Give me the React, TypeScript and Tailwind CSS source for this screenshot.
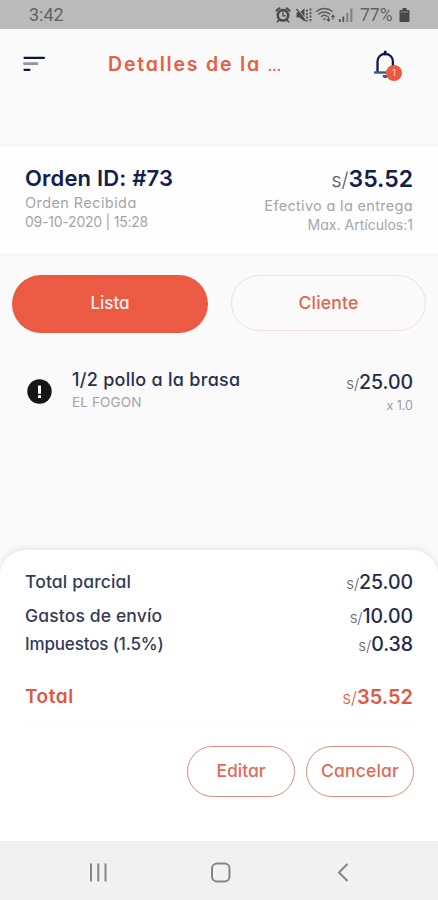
import React from 'react';

function StatusIcons() {
  return (
    <svg className="h-[29px] w-[84px]" viewBox="0 0 84 29" fill="none">
      <g stroke="#4a4a4a" strokeLinecap="round">
        <circle cx="10" cy="15.300" r="5.200" strokeWidth="2.600" />
        <path d="M3.400 10.600l3-2.400M16.600 10.600l-3-2.400" strokeWidth="2" />
        <path d="M5.600 20.600l-1.200 1M14.400 20.600l1.200 1" strokeWidth="1.800" />
        <path d="M10 12.600v3.200h2.400" strokeWidth="1.300" />
      </g>
      <path d="M23.500 12.400h3l5-4v13.200l-5-4h-3z" fill="#4a4a4a" />
      <path d="M24.600 8.300l8.400 11.400" stroke="#bababa" strokeWidth="1" />
      <path d="M23.500 9l9 12" stroke="#4a4a4a" strokeWidth="1.300" />
      <path d="M34 9.500v12M37.500 8.500v13" stroke="#555" strokeWidth="1.800" strokeDasharray="2.200 1.300" />
      <g stroke="#5c5c5c" strokeWidth="1.500" strokeLinecap="round">
        <path d="M43.600 11.200c4.300-3.700 11.200-3.700 15.400 0" />
        <path d="M46 13.900c3-2.600 7.600-2.600 10.600 0" />
        <path d="M48.500 16.500c1.700-1.400 3.900-1.400 5.600 0" />
      </g>
      <path d="M49.400 18.400h3.800l-1.900 2.200z" fill="#5c5c5c" />
      <path d="M55.500 16.400v4.400M54 19.200l1.500 1.800 1.500-1.800M60 19.400v-4M58.500 17l1.500-1.700 1.500 1.700" stroke="#555" strokeWidth="1.200" />
      <path d="M66.800 19v3M70.300 16.500V22" stroke="#565656" strokeWidth="1.800" />
      <path d="M74.300 13V22M78.300 8.500V22" stroke="#828282" strokeWidth="2.200" />
    </svg>
  );
}

function StatusBar() {
  return (
    <div className="flex h-[29px] items-center bg-[#bababa] pl-[29px] pr-[28px] font-['Roboto',sans-serif] text-[#626262]">
      <span className="text-[18px] leading-[30px]">3:42</span>
      <div className="ml-auto flex items-center">
        <StatusIcons />
        <span className="ml-[3px] w-[35px] whitespace-nowrap text-[17.500px] leading-[30px]">77%</span>
        <svg className="ml-[4px] h-[16px] w-[11px]" viewBox="0 0 11 16">
          <path d="M3.500 1h4v2H9.500q1 0 1 1v10q0 1-1 1h-8q-1 0-1-1V4q0-1 1-1h2z" fill="#484848" />
          <path d="M1.800 4.200h7.400v1.600H1.800z" fill="#777" />
        </svg>
      </div>
    </div>
  );
}

function Header() {
  return (
    <header className="flex h-[117px] items-start pl-[22px] pr-[35px] pt-[21px]">
      <svg className="mt-[5px] h-[18px] w-[24px]" viewBox="0 0 24 18" fill="none" strokeLinecap="round" strokeWidth="2.200">
        <path d="M2.500 2.800h19.500" stroke="#0d1538" />
        <path d="M2.500 8.700h12.500" stroke="#8c97a3" strokeWidth="2.800" />
        <path d="M2.500 14.800h5" stroke="#0d1538" />
      </svg>
      <h1 className="ml-[62px] whitespace-nowrap text-[19.500px] font-semibold leading-[28px] tracking-[1.8px] text-[#e65f47]">
        Detalles de la <span className="text-[14px] tracking-normal">…</span>
      </h1>
      <div className="relative ml-auto h-[32px] w-[31px]">
        <svg className="h-[32px] w-[31px]" viewBox="0 0 31 32" fill="none">
          <path d="M5.500 22V11.500C5.500 7 9 3.800 13.200 3.800s7.700 3.200 7.700 7.700V22" stroke="#0d1b4e" strokeWidth="2.300" />
          <path d="M2 22.500h21.800" stroke="#3d5b7b" strokeWidth="2.400" />
          <path d="M13.200 2v2" stroke="#0d1b4e" strokeWidth="3" strokeLinecap="round" />
          <path d="M10.500 25h5.400q-.4 3.300-2.700 3.300t-2.700-3.300z" fill="#3d5b7b" />
        </svg>
        <span className="absolute left-[14px] top-[14.500px] flex h-[16px] w-[16px] items-center justify-center rounded-full bg-[#ed5840] text-[9px] leading-none text-[#ffd8cf]">
          1
        </span>
      </div>
    </header>
  );
}

function OrderCard() {
  return (
    <section className="flex h-[108px] justify-between bg-[#fefefe] pl-[25px] pr-[25px] shadow-[0_0_4px_rgba(0,0,0,0.05)]">
      <div className="whitespace-nowrap pt-[19px]">
        <h2 className="text-[22px] font-semibold leading-[26px] tracking-[0.18px] text-[#12204f]">Orden ID: #73</h2>
        <p className="mt-[2px] text-[14.500px] leading-[19px] tracking-[0.42px] text-[#a3a5ab]">Orden Recibida</p>
        <p className="text-[14px] leading-[19px] tracking-[-0.23px] text-[#a3a5ab]">09-10-2020 | 15:28</p>
      </div>
      <div className="whitespace-nowrap pt-[20px] text-right">
        <p className="h-[26px] text-[23px] font-semibold leading-[26px] text-[#12204f]">
          <span className="text-[20px] font-light text-[#555a6b]">s/</span>35.52
        </p>
        <p className="mt-[4px] text-[14.500px] leading-[19px] tracking-[0.32px] text-[#a3a5ab]">Efectivo a la entrega</p>
        <p className="text-[14px] leading-[20px] tracking-[0.02px] text-[#a3a5ab]">Max. Artículos:1</p>
      </div>
    </section>
  );
}

function Tabs() {
  return (
    <div className="flex gap-[23px] px-[12px] pt-[21px]">
      <button className="h-[58px] w-[196px] rounded-full bg-[#eb5a42] pb-px text-[17px] font-medium text-[#fff0eb]">Lista</button>
      <button className="h-[56px] w-[195px] rounded-full border border-[#f6ddd8] text-[17.500px] font-medium tracking-[0.2px] text-[#e26450]">
        Cliente
      </button>
    </div>
  );
}

function OrderItem() {
  return (
    <div className="flex h-[217px] items-start whitespace-nowrap pl-[27px] pr-[25px] pt-[36px]">
      <svg className="mt-[10px] h-[26px] w-[26px]" viewBox="0 0 26 26">
        <circle cx="12.500" cy="12.500" r="12.200" fill="#151515" />
        <path d="M11 6.500h3v8.300h-3zM11 16.300h3V19h-3z" fill="#fafafa" />
      </svg>
      <div className="ml-[19px]">
        <p className="text-[18px] font-medium leading-[22px] tracking-[0.28px] text-[#29304f]">1/2 pollo a la brasa</p>
        <p className="mt-px text-[13.500px] leading-[20px] tracking-[0.15px] text-[#a3a5ab]">EL FOGON</p>
      </div>
      <div className="ml-auto pt-[2px] text-right">
        <Amount value="25.00" />
        <p className="mt-[4px] text-[12.500px] leading-[18px] text-[#9b9ea5]">x 1.0</p>
      </div>
    </div>
  );
}

function Amount({ value }: { value: string }) {
  return (
    <p className="h-[22px] text-[19.500px] font-medium leading-[22px] tracking-[-0.05px] text-[#252c4b]">
      <span className="text-[15px] font-light text-[#5d6273]">s/</span>
      {value}
    </p>
  );
}

function Summary() {
  return (
    <section className="h-[291px] whitespace-nowrap rounded-t-[26px] bg-white pl-[25px] pr-[25px] pt-[21px] shadow-[0_-2px_7px_rgba(0,0,0,0.08)]">
      <div className="text-[17.500px] font-medium leading-[22px] text-[#343b58]">
        <div className="flex h-[22px] justify-between">
          <span className="tracking-[0.15px]">Total parcial</span>
          <Amount value="25.00" />
        </div>
        <div className="mt-[12px] flex h-[22px] justify-between">
          <span className="tracking-[0.14px]">Gastos de envío</span>
          <Amount value="10.00" />
        </div>
        <div className="mt-[6px] flex h-[22px] justify-between">
          <span className="text-[17px] tracking-[-0.15px]">Impuestos (1.5%)</span>
          <Amount value="0.38" />
        </div>
      </div>
      <div className="mt-[31px] flex h-[22px] justify-between font-semibold leading-[22px] text-[#e4573f]">
        <span className="text-[19px] tracking-[0.55px]">Total</span>
        <span className="text-[20px]">
          <span className="text-[17px] font-light">s/</span>35.52
        </span>
      </div>
      <div className="mt-[18px] h-px bg-[#fafafa]" />
      <div className="-mr-[1px] mt-[19px] flex justify-end gap-[11px]">
        <button className="h-[51px] w-[108px] rounded-full border border-[#dc8c7c] text-[17.500px] font-medium text-[#df6a56]">Editar</button>
        <button className="h-[51px] w-[108px] rounded-full border border-[#dc8c7c] text-[17.500px] font-medium tracking-[0.2px] text-[#df6a56]">Cancelar</button>
      </div>
    </section>
  );
}

function NavBar() {
  return (
    <nav className="flex h-[59px] items-center bg-[#f1f1f1] pl-[89px]">
      <svg className="mt-[4px] h-[24px] w-[262px]" viewBox="0 0 262 24" fill="none" stroke="#858585" strokeWidth="2">
        <path d="M2 2.500v18M9.300 2.500v18M16.500 2.500v18" />
        <rect x="123" y="2.500" width="17.500" height="18" rx="5" />
        <path d="M258.500 3l-8.500 8.500 8.500 8.500" />
      </svg>
    </nav>
  );
}

export default function App() {
  return (
    <div className="h-[900px] w-[438px] overflow-hidden bg-[#fafafa] font-['Inter',sans-serif] [font-feature-settings:'cv11']">
      <StatusBar />
      <Header />
      <OrderCard />
      <Tabs />
      <OrderItem />
      <Summary />
      <NavBar />
    </div>
  );
}
